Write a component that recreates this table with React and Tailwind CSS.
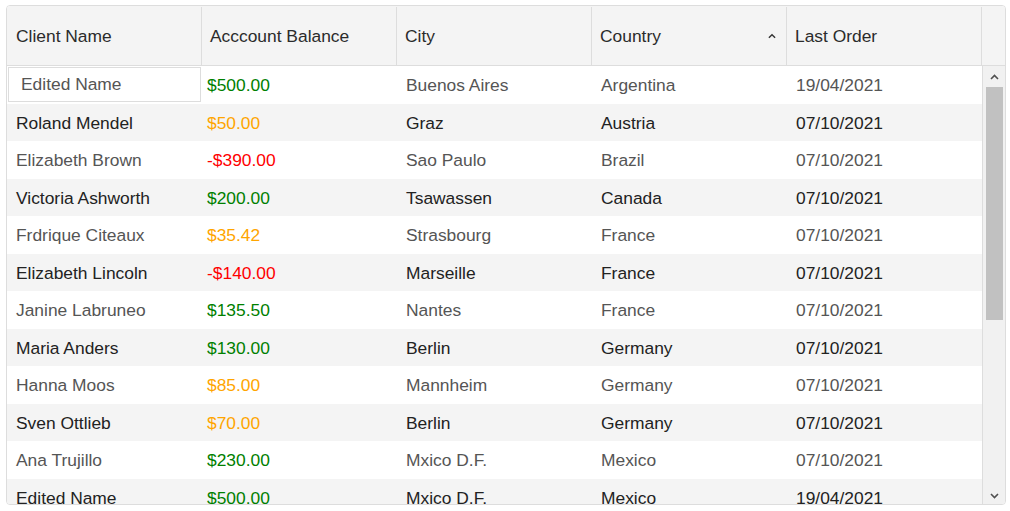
import React from 'react';

const rows = [
  { name: 'Edited Name', balance: 500, city: 'Buenos Aires', country: 'Argentina', date: '19/04/2021' },
  { name: 'Roland Mendel', balance: 50, city: 'Graz', country: 'Austria', date: '07/10/2021' },
  { name: 'Elizabeth Brown', balance: -390, city: 'Sao Paulo', country: 'Brazil', date: '07/10/2021' },
  { name: 'Victoria Ashworth', balance: 200, city: 'Tsawassen', country: 'Canada', date: '07/10/2021' },
  { name: 'Frdrique Citeaux', balance: 35.42, city: 'Strasbourg', country: 'France', date: '07/10/2021' },
  { name: 'Elizabeth Lincoln', balance: -140, city: 'Marseille', country: 'France', date: '07/10/2021' },
  { name: 'Janine Labruneo', balance: 135.5, city: 'Nantes', country: 'France', date: '07/10/2021' },
  { name: 'Maria Anders', balance: 130, city: 'Berlin', country: 'Germany', date: '07/10/2021' },
  { name: 'Hanna Moos', balance: 85, city: 'Mannheim', country: 'Germany', date: '07/10/2021' },
  { name: 'Sven Ottlieb', balance: 70, city: 'Berlin', country: 'Germany', date: '07/10/2021' },
  { name: 'Ana Trujillo', balance: 230, city: 'Mxico D.F.', country: 'Mexico', date: '07/10/2021' },
  { name: 'Edited Name', balance: 500, city: 'Mxico D.F.', country: 'Mexico', date: '19/04/2021' },
];

const fmt = (v) => (v < 0 ? '-$' : '$') + Math.abs(v).toFixed(2);

const balanceColor = (v) => {
  if (v < 0) return 'text-[#ff0000]';
  if (v < 100) return 'text-[#ffa500]';
  return 'text-[#008000]';
};

function Chevron({ up = true, className = '' }) {
  return (
    <svg width="9" height="6" viewBox="0 0 9 6" className={className}>
      <path
        d={up ? 'M1 5 L4.5 1.5 L8 5' : 'M1 1 L4.5 4.5 L8 1'}
        fill="none"
        stroke="currentColor"
        strokeWidth="1.6"
      />
    </svg>
  );
}

export default function App() {
  return (
    <div className="pl-[6px] pt-[5px] bg-white min-h-[511px]" style={{ fontFamily: '"Liberation Sans", Arial, sans-serif' }}>
      <div className="w-[1000px] h-[500px] border border-[#dddddd] rounded-[4px] overflow-hidden flex flex-col text-[17.4px]">
        {/* header */}
        <div className="flex h-[60px] shrink-0 bg-[#f4f4f4] border-b border-[#dddddd] text-[#2b2b2b] pt-[1px]">
          <div className="w-[195px] border-r border-[#dddddd] flex items-center pl-[9px]">Client Name</div>
          <div className="w-[195px] border-r border-[#dddddd] flex items-center pl-[8px]">Acccount Balance</div>
          <div className="w-[195px] border-r border-[#dddddd] flex items-center pl-[8px]">City</div>
          <div className="w-[195px] border-r border-[#dddddd] flex items-center justify-between pl-[8px] pr-[10px]">
            <span>Country</span>
            <Chevron className="text-[#333333] w-[8px] h-[6px]" />
          </div>
          <div className="w-[195px] border-r border-[#dddddd] flex items-center pl-[8px]">Last Order</div>
          <div className="flex-1" />
        </div>

        {/* body */}
        <div className="flex flex-1 min-h-0">
          <div className="w-[975px] overflow-hidden">
            {rows.map((r, i) => {
              const even = i % 2 === 1;
              const txt = even ? 'text-[#222222]' : 'text-[#555555]';
              return (
                <div
                  key={i}
                  className={`flex h-[37.5px] items-center pt-[1px] ${even ? 'bg-[#f4f4f4]' : 'bg-white'} ${txt}`}
                >
                  {i === 0 ? (
                    <div className="w-[195px] h-full pl-[1px] -mt-[1px]">
                      <div className="w-[193px] h-[35px] border border-[#dddddd] bg-white flex items-center pl-[12px] pt-[1px] text-[#555555]">
                        {r.name}
                      </div>
                    </div>
                  ) : (
                    <div className="w-[195px] pl-[9px]">{r.name}</div>
                  )}
                  <div className={`w-[195px] pl-[5px] ${balanceColor(r.balance)}`}>{fmt(r.balance)}</div>
                  <div className="w-[195px] pl-[9px]">{r.city}</div>
                  <div className="w-[195px] pl-[9px]">{r.country}</div>
                  <div className="w-[195px] pl-[9px]">{r.date}</div>
                </div>
              );
            })}
          </div>
          {/* scrollbar */}
          <div className="flex-1 border-l border-[#dddddd] bg-[#f1f1f1] flex flex-col items-center">
            <div className="h-[21px] flex items-center justify-center text-[#505050]">
              <Chevron />
            </div>
            <div className="w-[17px] h-[233px] bg-[#c1c1c1]" />
            <div className="flex-1" />
            <div className="h-[17px] flex items-center justify-center text-[#505050]">
              <Chevron up={false} />
            </div>
          </div>
        </div>
      </div>
    </div>
  );
}
